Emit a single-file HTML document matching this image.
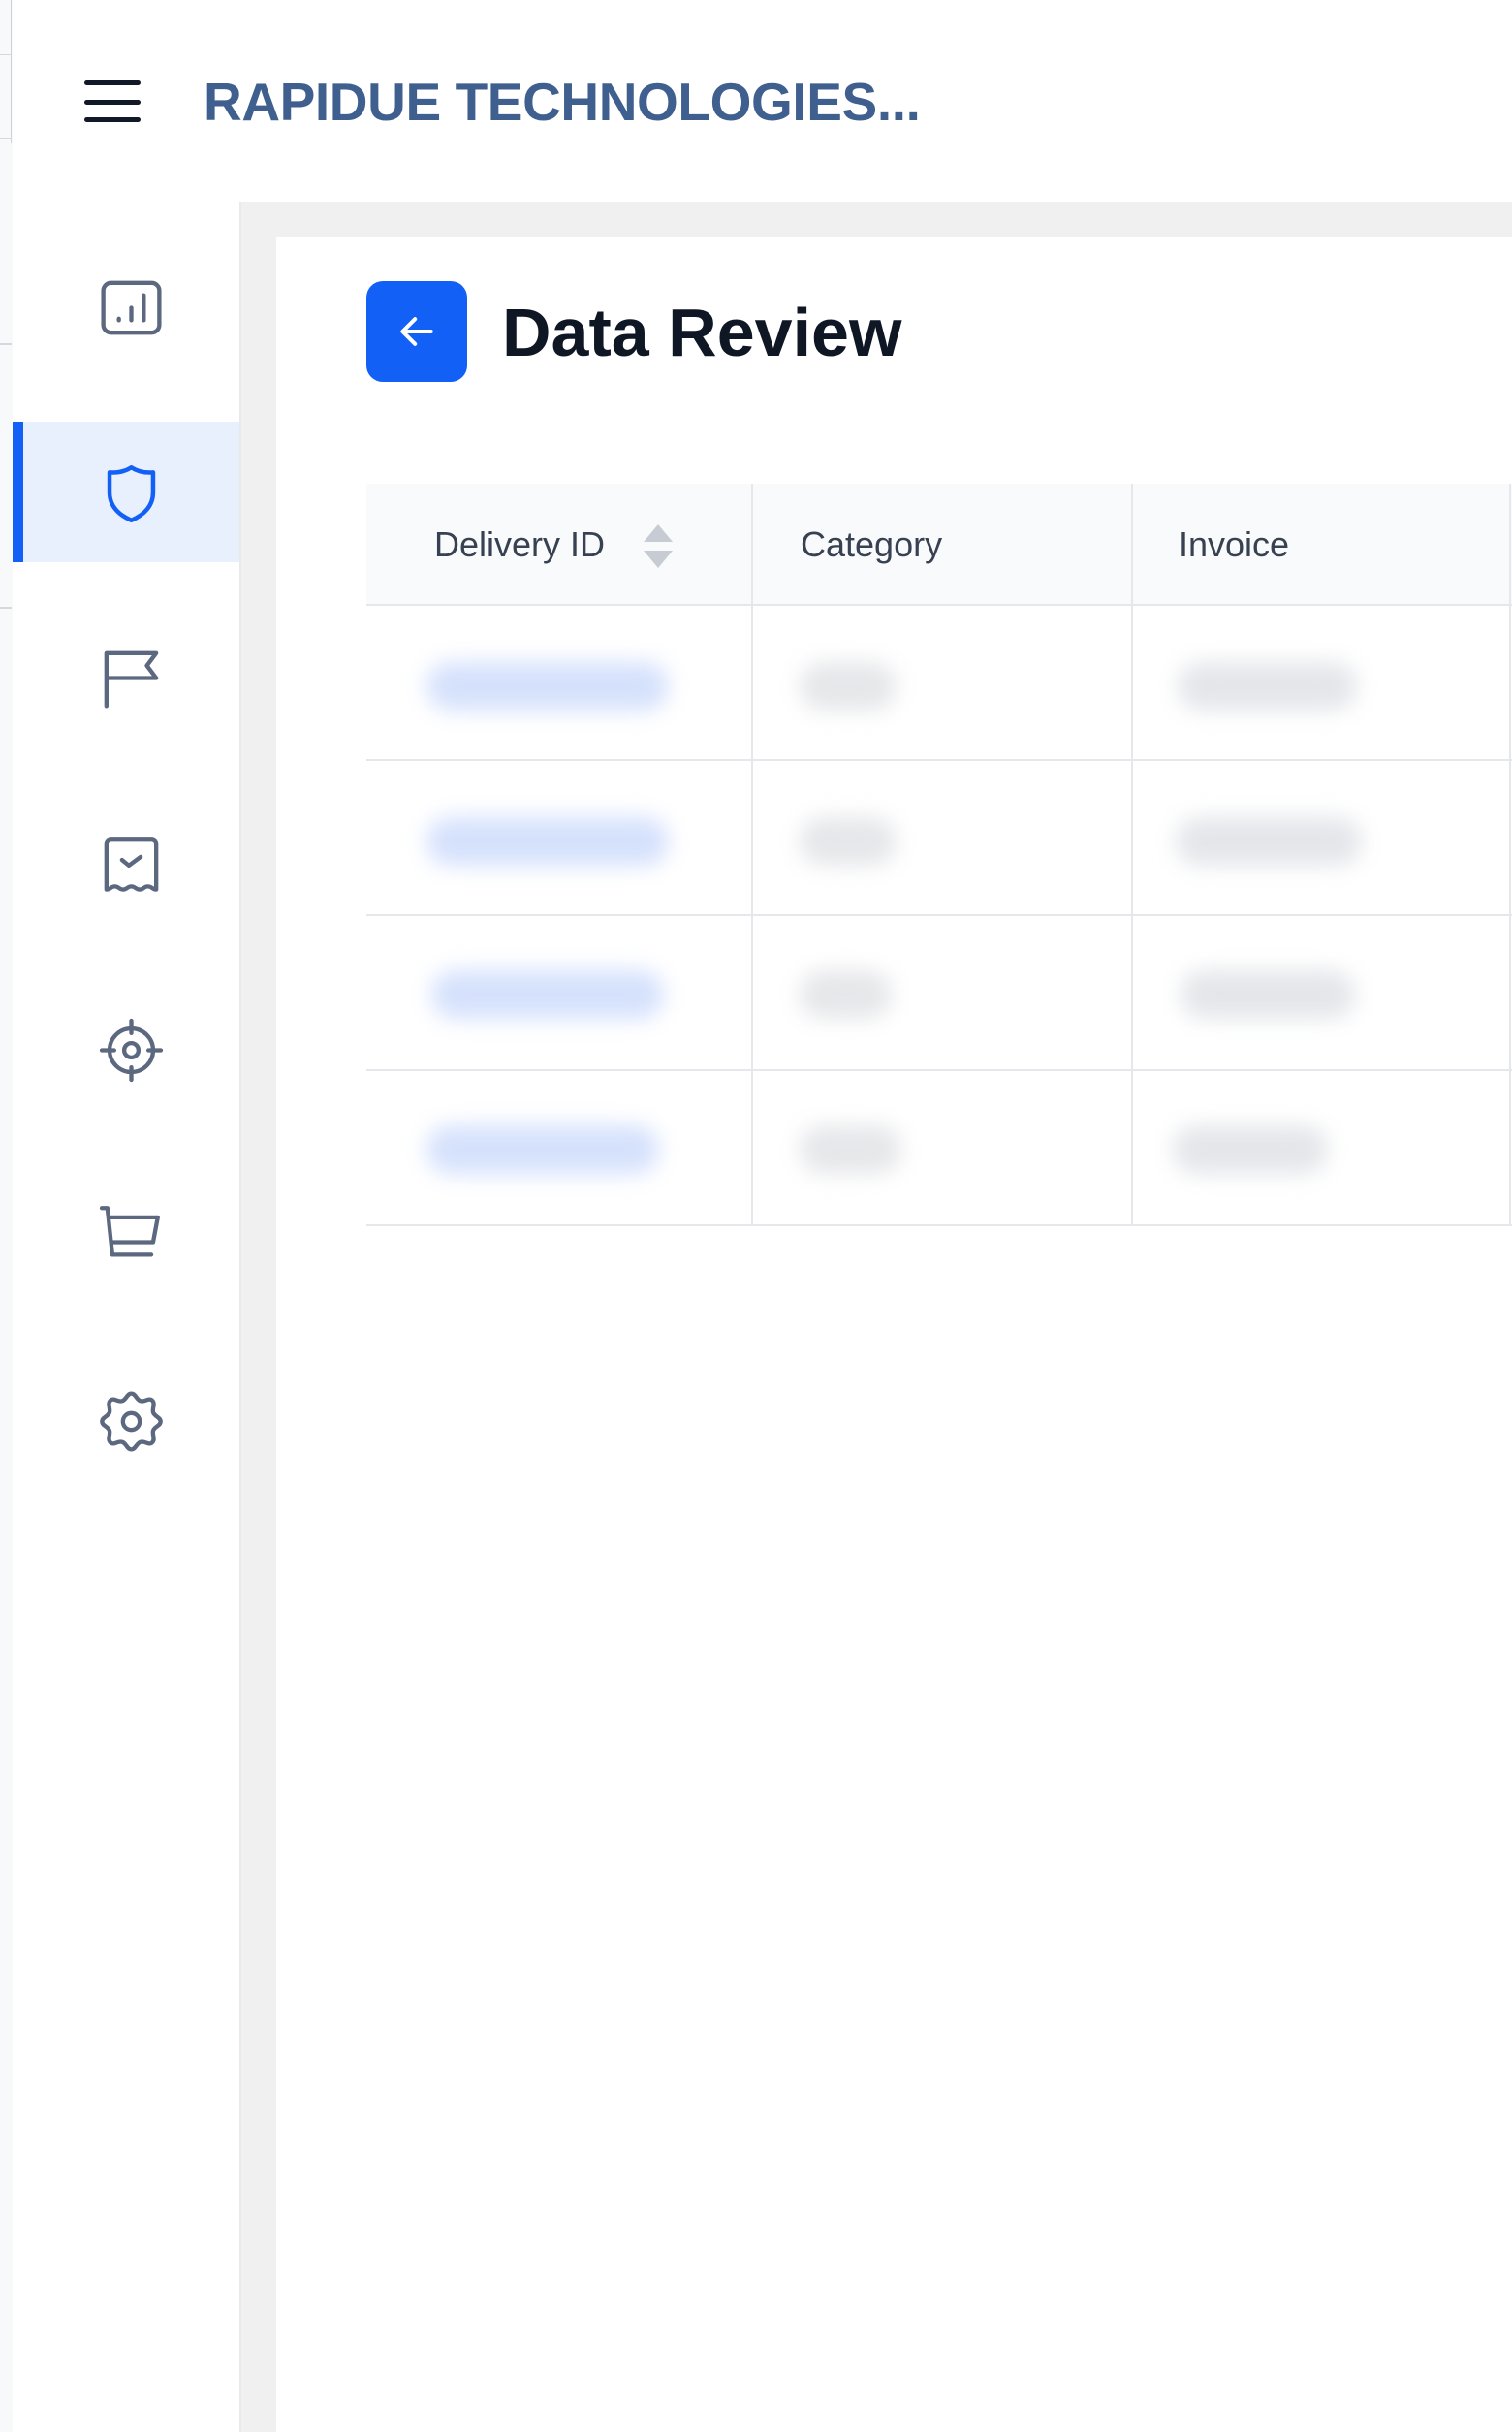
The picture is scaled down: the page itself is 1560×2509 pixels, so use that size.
<!DOCTYPE html>
<html><head><meta charset="utf-8"><style>
*{margin:0;padding:0;box-sizing:border-box}
html,body{width:1560px;height:2509px;background:#fff;overflow:hidden;font-family:"Liberation Sans",sans-serif}
.abs{position:absolute}
.strip{left:0;top:0;width:13px;height:2509px;background:#f8f9fb}
.gray{left:247px;top:208px;width:1313px;height:2301px;background:#f0f0f0;border-left:2px solid #e8e9ec}
.panel{left:285px;top:244px;width:1275px;height:2265px;background:#fff}
.ham{left:87px;width:58px;height:5px;background:#111827;border-radius:3px}
.brand{left:210px;top:70px;font-size:55px;font-weight:700;color:#3f5f8f;line-height:70px;letter-spacing:-0.4px}
.active{left:13px;top:435px;width:234px;height:145px;background:#e8effd}
.bar{left:13px;top:435px;width:11px;height:145px;background:#1260f5}
.ic{left:97px;width:77px;height:77px}
.btn{left:378px;top:290px;width:104px;height:104px;background:#1260f5;border-radius:17px}
.title{left:518px;top:298px;font-size:70px;font-weight:700;color:#0f1624;line-height:90px}
.th{top:499px;height:126px;background:#f9fafb;border-bottom:2px solid #e5e7eb}
.hl{font-size:36px;color:#374151;line-height:126px;top:499px}
.vl{width:2px;background:#e5e7eb;top:499px;height:765px}
.hr{left:378px;width:1182px;height:2px;background:#e5e7eb}
.bl{height:50px;border-radius:25px;filter:blur(11px)}
</style></head><body>
<div class="abs strip"></div>
<div class="abs" style="left:0;top:56px;width:12px;height:1px;background:#d5d8dd"></div>
<div class="abs" style="left:0;top:142px;width:12px;height:1px;background:#d5d8dd"></div>
<div class="abs" style="left:11px;top:0;width:1px;height:148px;background:#cfd3d9"></div>
<div class="abs" style="left:0;top:354px;width:12px;height:2px;background:#d5d8dd"></div>
<div class="abs" style="left:0;top:626px;width:12px;height:2px;background:#d5d8dd"></div>
<div class="abs ham" style="top:83px"></div>
<div class="abs ham" style="top:103px"></div>
<div class="abs ham" style="top:121px"></div>
<div class="abs brand">RAPIDUE TECHNOLOGIES...</div>
<div class="abs gray"></div>
<div class="abs panel"></div>
<div class="abs active"></div>
<div class="abs bar"></div>

<svg class="abs ic" style="top:279px" viewBox="0 0 24 24" fill="none" stroke="#5b6880" stroke-width="1.35" stroke-linecap="round" stroke-linejoin="round"><rect x="3" y="4" width="18" height="16" rx="2.5"/><path d="M8 16v-.5M12 16v-4M16 16V8"/></svg>
<svg class="abs ic" style="top:471px" viewBox="0 0 24 24" fill="none" stroke="#1260f5" stroke-width="1.4" stroke-linejoin="round"><path d="M12 3.5c2 1.3 4.5 1.8 7 1.6v6.4c0 4.4-3 7.3-7 9-4-1.7-7-4.6-7-9V5.1c2.5.2 5-.3 7-1.6z"/></svg>
<svg class="abs ic" style="top:661px" viewBox="0 0 24 24" fill="none" stroke="#5b6880" stroke-width="1.35" stroke-linecap="round" stroke-linejoin="round"><path d="M4 21V4h16l-3 4 3 4H4"/></svg>
<svg class="abs ic" style="top:855px" viewBox="0 0 24 24" fill="none" stroke="#5b6880" stroke-width="1.35" stroke-linecap="round" stroke-linejoin="round"><path d="M4 19.5V5a1.5 1.5 0 0 1 1.5-1.5h13A1.5 1.5 0 0 1 20 5v14.5c-1.3 0-1.3-1-2.7-1s-1.3 1-2.6 1-1.4-1-2.7-1-1.4 1-2.7 1-1.3-1-2.6-1-1.4 1-2.7 1z"/><path d="M9 10l2.2 1.8L15 9"/></svg>
<svg class="abs ic" style="top:1045px" viewBox="0 0 24 24" fill="none" stroke="#5b6880" stroke-width="1.35" stroke-linecap="round"><circle cx="12" cy="12" r="7"/><circle cx="12" cy="12" r="2.3"/><path d="M12 2.5v4M12 17.5v4M2.5 12h4M17.5 12h4"/></svg>
<svg class="abs ic" style="top:1235px" viewBox="0 0 24 24" fill="none" stroke="#5b6880" stroke-width="1.35" stroke-linecap="round" stroke-linejoin="round"><path d="M2.5 3.5h1.8l1.6 15h12.5M5 6.5h15.5L19 14.5H5.8"/></svg>
<svg class="abs ic" style="top:1428px" viewBox="0 0 24 24" fill="none" stroke="#5b6880" stroke-width="1.35" stroke-linejoin="round"><path d="M12 3c1.4 0 1.6 2 3 2.4 1.4.4 2.6-1.2 3.7-.2s0 2.5.3 3.8c.4 1.4 2.4 1.6 2.4 3s-2 1.6-2.4 3c-.3 1.3.8 2.8-.3 3.8s-2.3-.6-3.7-.2c-1.4.4-1.6 2.4-3 2.4s-1.6-2-3-2.4c-1.4-.4-2.6 1.2-3.7.2s0-2.5-.3-3.8C4.6 13.6 2.6 13.4 2.6 12s2-1.6 2.4-3c.3-1.3-.8-2.8.3-3.8S7.6 5.8 9 5.4C10.4 5 10.6 3 12 3z"/><circle cx="12" cy="12" r="2.7"/></svg>

<div class="abs btn"><svg style="position:absolute;left:30px;top:30px" width="44" height="44" viewBox="0 0 24 24" fill="none" stroke="#fff" stroke-width="2.2" stroke-linecap="round" stroke-linejoin="round"><path d="M20 12H5M11 5l-7 7 7 7"/></svg></div>
<div class="abs title">Data Review</div>

<div class="abs th" style="left:378px;width:1182px"></div>
<div class="abs hl" style="left:448px">Delivery ID</div>
<svg class="abs" style="left:664px;top:541px" width="30" height="45" viewBox="0 0 30 45"><path d="M15 0L30 18H0z" fill="#c7ccd4"/><path d="M15 45L30 27H0z" fill="#c7ccd4"/></svg>
<div class="abs hl" style="left:826px">Category</div>
<div class="abs hl" style="left:1216px">Invoice</div>
<div class="abs vl" style="left:775px"></div>
<div class="abs vl" style="left:1167px"></div>
<div class="abs vl" style="left:1557px"></div>
<div class="abs hr" style="top:783px"></div>
<div class="abs hr" style="top:943px"></div>
<div class="abs hr" style="top:1103px"></div>
<div class="abs hr" style="top:1263px"></div>

<div class="abs bl" style="left:440px;top:683px;width:250px;background:#d5e1fc"></div>
<div class="abs bl" style="left:440px;top:843px;width:250px;background:#d5e1fc"></div>
<div class="abs bl" style="left:445px;top:1001px;width:240px;background:#d5e1fc"></div>
<div class="abs bl" style="left:440px;top:1161px;width:240px;background:#d5e1fc"></div>
<div class="abs bl" style="left:825px;top:683px;width:100px;background:#e6e7ea"></div>
<div class="abs bl" style="left:825px;top:843px;width:100px;background:#e6e7ea"></div>
<div class="abs bl" style="left:825px;top:1001px;width:95px;background:#e6e7ea"></div>
<div class="abs bl" style="left:825px;top:1161px;width:105px;background:#e6e7ea"></div>
<div class="abs bl" style="left:1215px;top:683px;width:185px;background:#e4e6ea"></div>
<div class="abs bl" style="left:1213px;top:843px;width:192px;background:#e4e6ea"></div>
<div class="abs bl" style="left:1218px;top:1001px;width:180px;background:#e4e6ea"></div>
<div class="abs bl" style="left:1210px;top:1161px;width:160px;background:#e4e6ea"></div>
</body></html>
